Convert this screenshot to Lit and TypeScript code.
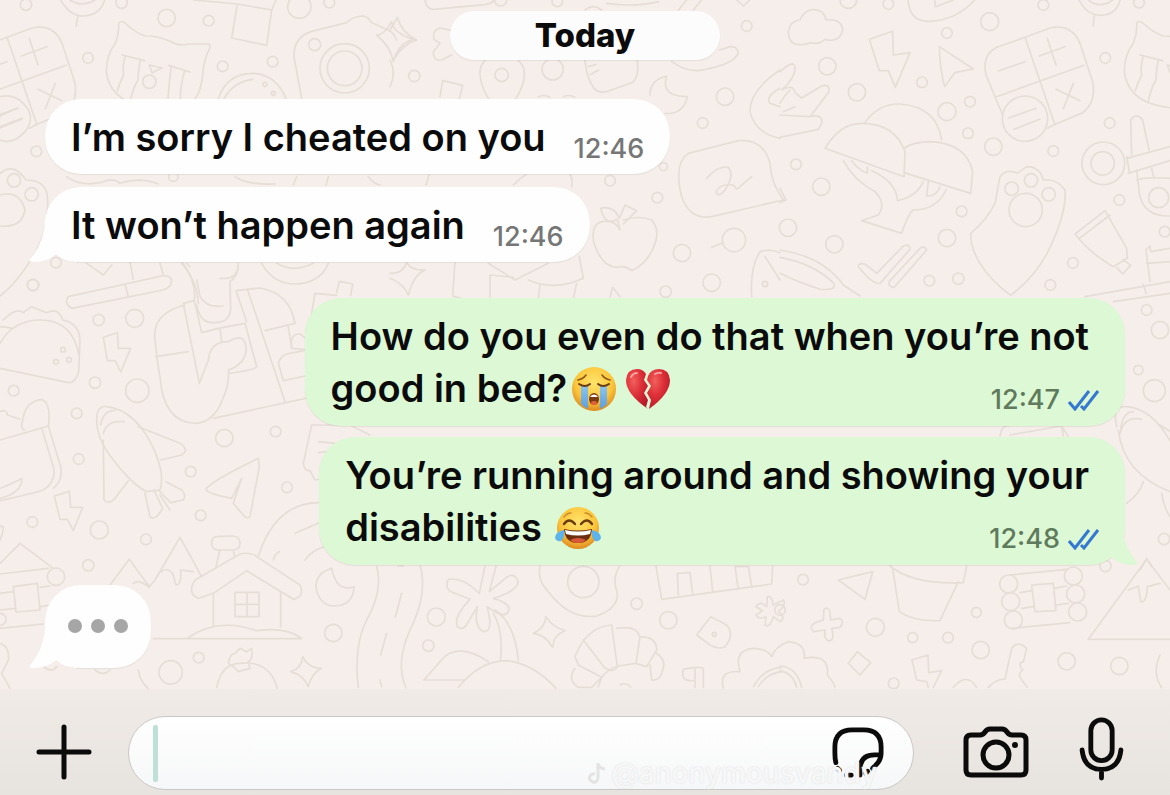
import { LitElement, html, css, svg, nothing, TemplateResult } from "lit";
import { customElement, property } from "lit/decorators.js";

/* Wallpaper doodles. Each group is drawn on a 3x grid and placed at an origin. */
interface DoodleGroup {
  x: number;
  y: number;
  paths: string[];
  dots: [number, number, number][];
}

const calculator =
  "M735 112L810 84Q875 70 900 130L938 245Q950 310 905 340L820 375L803 385M735 112L650 142Q605 165 618 225L668 345M735 112L825 375M650 290L912 196M655 213L735 185M778 168L855 140M802 115L828 195M828 268L900 302M880 250L850 326M685 354L768 325M702 388L780 357";
const cat =
  "M1060 130Q1072 100 1070 70Q1078 58 1092 72Q1120 98 1150 108Q1190 108 1224 124Q1250 140 1280 132L1342 132Q1348 140 1336 160Q1324 190 1322 225Q1315 300 1270 320Q1180 335 1105 308Q1040 280 1033 215Q1033 165 1060 130M1080 165L1148 182M1090 168Q1080 200 1085 225Q1072 250 1066 272M1135 180Q1128 215 1128 240Q1112 265 1104 308M1220 196L1284 216M1228 200Q1222 240 1218 295M1268 212Q1256 250 1254 300M1162 195L1200 204L1170 218Z";

const groups: DoodleGroup[] = [
  {
    x: 0,
    y: 0,
    paths: [
      "M182 0Q210 48 250 48Q300 46 314 0M210 0Q245 24 285 0M234 48L228 78",
      "M580 0L712 12L695 114L800 136L815 30M712 12L815 30L828 0",
      "M905 296L882 170Q880 112 935 94L1040 68Q1060 48 1090 48Q1108 52 1112 66L1150 84Q1180 92 1190 120M1130 105Q1150 108 1175 65Q1180 100 1240 118Q1195 130 1180 185Q1172 140 1130 105",
      "M655 296Q680 220 760 220Q830 225 858 296M672 296Q700 245 758 238",
      "M200 530Q240 560 300 548Q340 530 360 550Q420 530 475 552M705 530Q740 555 825 552M880 555L890 530M985 530L978 555M1105 530Q1120 550 1140 555",
      "M0 290Q40 280 70 310Q110 350 75 395Q40 435 0 420M0 348L50 325M0 380L66 355",
      "M0 520Q40 485 78 540Q138 540 142 590Q150 690 95 775Q50 850 0 888M0 585Q60 570 75 630Q65 685 0 678",
      "M205 890L485 828Q515 824 515 845Q515 860 490 870L215 925Q190 910 205 890M375 852L385 890M390 786L400 838M480 790L490 826",
      "M545 790Q590 840 595 910M560 790L570 800M715 790Q715 830 690 845L692 925Q690 970 640 968Q600 970 590 915M260 790L310 825L335 795M785 790Q820 852 885 852Q960 850 985 790M830 790Q880 820 940 790",
    ],
    dots: [[78, 14, 17], [365, 8, 17], [500, 54, 26], [626, 62, 16], [264, 174, 16], [668, 199, 16], [818, 185, 16], [944, 134, 18], [898, 20, 35], [988, 8, 16], [1034, 205, 74], [1034, 205, 52], [109, 454, 16], [42, 541, 20], [95, 583, 20], [168, 788, 16], [99, 855, 17], [520, 530, 14], [795, 253, 6], [820, 280, 6]],
  },
  {
    x: 390,
    y: 0,
    paths: [
      "M105 0Q110 28 130 28L285 14Q312 8 310 0M650 10Q740 22 805 5M865 30L890 0M910 30L935 0M1040 0L1060 18L1080 0",
      "M185 92L150 84Q125 92 132 118L150 130L130 155Q130 185 155 180L185 165",
      "M295 296Q250 215 285 182M385 182Q425 215 378 296M150 290L158 242L218 256L208 296",
      "M585 182Q590 235 612 265Q625 280 650 275L725 248Q748 235 742 182M595 200L618 194M600 224L626 210",
      "M845 185Q900 225 960 205Q1030 190 1045 160Q1040 130 1005 145L988 150M585 30Q610 10 635 30",
      "M830 228Q780 240 780 285M830 228Q810 290 892 290Q880 345 825 340",
      "M1170 210Q1080 270 1080 335Q1095 400 1170 415M1170 265Q1125 290 1140 310L1170 320",
      "M895 460L1045 422Q1120 415 1140 490Q1145 545 1165 575L1180 600L965 650Q900 660 875 590Q850 490 895 460M950 535Q985 495 1015 502Q1035 525 1005 570Q985 595 978 575Q990 550 1030 555L1040 568L1085 530",
      "M108 555L118 522M370 555Q390 535 410 522M540 522Q550 540 545 560M445 290Q465 282 480 292M520 290Q540 282 555 292",
      "M690 690L682 658Q645 680 632 625Q670 615 688 655L705 615L740 632L700 672M700 660Q750 645 785 660Q810 690 795 730Q775 790 725 812Q705 795 680 802Q635 800 612 730Q600 670 640 664Q675 660 690 690",
      "M965 742L1000 728M1085 890Q1080 800 1110 755Q1140 745 1170 758M1125 770L1170 840M660 890L668 862L690 890",
      "M195 786L188 888L215 895M295 790L375 840L475 790M415 840Q495 875 580 835L568 770M300 890L300 825L370 832M450 855L445 895M560 850L550 895",
      "M0 820Q40 822 50 786Q60 812 105 810Q70 825 55 885Q40 850 0 835M0 90L22 52Q35 100 80 120Q40 130 10 180M0 180Q20 220 0 260",
    ],
    dots: [[335, 225, 20], [73, 228, 17], [488, 208, 32], [1070, 78, 16], [1005, 290, 26], [938, 369, 16], [660, 542, 16], [802, 593, 16], [1032, 720, 35], [876, 759, 26], [965, 848, 26], [827, 875, 17], [1125, 852, 8], [502, 4, 16], [332, 0, 18], [820, 500, 12]],
  },
  {
    x: 780,
    y: 0,
    paths: [
      calculator,
      cat,
      "M60 60Q80 15 125 35Q135 45 138 60Q185 55 188 90Q178 130 135 118Q115 135 95 128Q25 150 25 95Q30 62 60 60",
      "M384 0Q390 68 450 64Q530 60 584 0M464 0L466 20L520 0",
      "M897 0Q920 46 962 46Q1010 44 1020 0M925 0Q960 28 998 0M942 48L940 78",
      "M268 118L338 94L340 165L390 158L346 262L325 212L298 212Z",
      "M478 140L580 207L524 218L494 260Q480 210 478 140",
      "M0 215Q45 175 45 205Q45 235 5 270Q40 250 45 278L65 294L125 258Q150 250 147 275L90 350Q130 340 125 370L115 388L0 412M0 310Q10 290 30 270M10 335L45 320M0 345L90 350",
      "M135 445Q180 370 245 370Q345 370 375 455L372 530ZM255 368Q295 310 360 312Q470 320 485 420M372 445Q400 425 450 425Q560 430 578 515L572 580L372 518M190 482Q220 540 285 575Q320 610 295 645L245 662L365 700Q385 640 400 630Q470 630 498 570M215 482Q235 510 262 520L262 502M275 512Q350 545 352 602Q410 590 430 545M445 545L440 588Q470 590 480 560",
      "M572 700Q570 740 600 790Q630 840 692 886Q780 820 820 720Q860 630 855 570Q830 535 790 540Q780 500 740 500L712 520Q680 505 660 530L645 610Q620 660 572 700",
      "M1040 475L1170 440M1045 520L1170 482M1055 465L1052 360Q1070 335 1088 360L1107 450M1070 510L1078 580Q1090 650 1170 648M1070 540Q1100 530 1170 535M1115 505L1122 535M1040 470L1048 515",
      "M885 702L975 632L1040 745L1042 775L1000 800Q930 760 885 702M898 715L990 645M1030 778L1052 796L1028 822L1010 802",
      "M235 795Q250 785 265 800L290 820L370 738Q390 730 390 748L300 850Q280 855 235 800M420 745Q435 735 440 750L342 862Q320 860 330 842L420 745",
      "M0 750Q130 770 190 855L240 888M0 772Q100 790 162 850Q170 872 120 868Q50 845 0 820M0 565L18 600L0 608",
      "M1170 845L915 890M1170 880L1000 905M1090 852L1098 880M1110 845L1098 750L1110 738L1112 755L1170 745M1100 790L1170 785",
    ],
    dots: [[205, 0, 25], [325, 12, 16], [142, 199, 26], [231, 277, 26], [426, 247, 16], [501, 99, 16], [629, 65, 27], [790, 15, 16], [1077, 8, 16], [976, 174, 16], [501, 335, 27], [570, 305, 16], [564, 400, 16], [640, 440, 26], [735, 356, 68], [820, 453, 16], [989, 369, 16], [970, 490, 64], [968, 490, 35], [1136, 593, 30], [1018, 600, 16], [48, 493, 16], [124, 560, 26], [24, 683, 26], [163, 733, 26], [545, 634, 16], [501, 714, 26], [695, 566, 20], [753, 541, 20], [806, 583, 20], [737, 630, 50], [879, 789, 16], [811, 855, 16], [535, 836, 17], [448, 842, 16], [1154, 695, 16]],
  },
  {
    x: 0,
    y: 260,
    paths: [
      "M10 180Q50 140 70 158L95 140L140 158Q175 140 188 180Q240 190 240 245L236 335Q225 370 205 368L0 325M0 250Q40 180 120 180Q220 180 238 290M0 200Q20 200 35 205",
      "M0 540L125 504L160 620Q170 665 130 690Q100 700 0 722M125 504L145 498L182 620Q190 660 160 685M68 480Q60 510 75 510M68 480Q75 425 125 418Q155 430 145 498M0 455Q20 445 22 465L60 478M0 685Q40 670 66 655Q65 700 0 715",
      "M310 232L352 218L355 265L392 265L362 336L345 302L322 302ZM163 708L208 694L212 742L248 742L220 812L202 778L180 778Z",
      "M290 480Q290 435 320 440Q410 450 465 575Q495 650 480 690L440 695Q390 670 325 580Q290 530 290 480M302 495Q310 450 345 452M310 520Q320 480 372 485M415 500L540 550Q570 570 545 585L482 600M310 540L312 720Q325 735 345 715L385 662M435 700L450 770Q465 785 488 745L462 690M480 705L510 750M498 665L545 690Q560 705 550 720L512 728L475 690",
      "M618 688Q630 665 775 595L778 620L750 770Q740 780 725 760L700 730L725 655L695 715Q620 700 618 688",
      "M555 135Q455 160 465 240Q475 330 480 350Q490 490 590 490Q640 485 665 425Q690 370 685 330Q740 310 738 265Q735 215 685 245Q630 245 625 300L598 370L550 130L583 122L605 218L655 205M468 290L565 275M583 122Q590 60 545 5M708 92L740 185M743 90L855 425M708 92L780 84Q870 100 885 190L795 212M655 205L735 190L770 320Q765 330 690 340M660 205L665 245M640 475L930 412M865 200L875 265L930 270M875 260Q870 220 900 222L930 245M835 310Q840 290 860 282L930 268M835 310L850 362L930 345",
      "M1010 98L1018 64L1058 72L1052 106M930 190L945 100L1010 106M715 20Q710 60 660 55M590 60L600 110Q620 145 670 138",
      "M910 610L935 495L1050 495L1110 525M910 610Q912 632 930 632L945 660L970 655M955 545L1005 550M955 578L980 575",
      "M775 888Q830 720 970 728M885 820L965 785M820 900Q825 880 838 875M915 900Q935 870 980 858",
    ],
    dots: [[99, 75, 17], [296, 180, 17], [404, 175, 27], [285, 368, 17], [41, 392, 16], [412, 392, 35], [230, 460, 16], [236, 597, 16], [673, 534, 26], [827, 515, 16], [572, 635, 16], [861, 682, 16], [602, 766, 16], [97, 786, 16], [298, 810, 27], [438, 838, 16], [189, 269, 7], [168, 305, 7], [207, 299, 7]],
  },
  {
    x: 0,
    y: 500,
    paths: [
      "M0 190L60 130L160 205M0 222L145 205M40 260L112 250L120 330L48 336ZM0 280L40 275M0 330L45 325M120 262L150 258M122 320L145 316M0 385L130 372M0 80Q20 70 0 120",
      "M330 255L388 178L448 260L465 240L540 112L605 230M400 250Q415 235 448 262M485 215Q500 200 518 220L528 255Q545 255 542 210L580 215",
      "M640 280L595 295Q560 280 585 240L720 162Q750 155 770 170L900 255Q915 290 880 298L740 212L640 280V380M842 275V380M705 277H777V350H705ZM741 277V350M705 313H777M660 150L648 200M700 155L705 170M650 110Q635 110 635 128Q635 150 655 150L705 150Q722 145 720 125Q715 108 695 108Z",
      "M460 416H905Q860 380 770 392Q650 350 560 416M0 430Q30 440 25 480L5 520L30 565M415 510Q420 545 445 566M130 500Q155 520 170 500M285 510Q310 530 330 510",
      "M995 205Q945 220 948 265Q960 318 1005 318Q1060 315 1062 260Q1010 280 995 205M1130 200Q1150 270 1100 360Q1060 440 1075 562M1160 400L1142 465M1140 540L1145 560",
      "M650 562Q665 490 720 490Q810 480 832 566M685 490Q690 460 705 460L720 445L740 455L755 445Q760 480 745 485L750 505L715 515L700 500ZM872 515Q905 505 908 470Q925 505 965 505Q935 520 925 560Q910 525 872 515",
    ],
    dots: [[265, 196, 17], [168, 230, 26], [0, 358, 18], [1000, 399, 26], [512, 517, 35], [596, 473, 16]],
  },
  {
    x: 390,
    y: 540,
    paths: [
      "M90 75Q115 160 60 270Q15 370 48 443M35 160L16 230M25 78L40 78",
      "M285 78L268 160Q220 110 175 118Q160 150 195 160L240 178Q190 230 202 260Q220 275 235 245L262 200Q250 260 280 275Q300 275 300 245L292 200Q350 245 358 205Q350 185 310 175Q380 155 385 125Q370 90 340 120L298 155L318 78",
      "M310 220Q340 270 332 358M315 210Q375 250 385 362M205 442Q270 362 350 362Q430 370 498 445M295 365Q200 300 150 365L102 420H225",
      "M450 78Q440 120 475 155Q540 240 620 228Q685 205 682 160Q665 110 690 78",
      "M430 280Q465 265 468 230Q485 260 525 272Q490 285 488 322Q468 285 430 280",
      "M555 385Q530 420 565 442L605 442L635 412L565 375L555 350Q590 260 665 255L682 380Q670 400 645 385L580 300M680 265Q740 255 750 290L738 370L685 378M750 290Q800 290 800 330L770 380L738 370M800 340Q830 360 818 390Q810 425 785 420L780 375M630 420Q655 380 690 378M690 435Q710 425 722 442M635 412L625 440",
      "M798 78L815 178L1145 132L1148 78M865 165L862 100L900 98L908 162M960 78L968 155M1045 148L1035 80L1075 80L1085 138",
      "M962 230L1010 255Q1035 285 1005 320Q985 330 960 315L920 285ZM880 388Q930 378 940 385L940 442M915 442V388M880 388Q870 425 910 422",
      "M1098 200Q1110 180 1130 200L1132 170Q1145 165 1150 195L1180 180Q1190 195 1165 215Q1190 235 1170 245L1150 230Q1140 265 1125 255L1128 230Q1105 240 1098 225L1118 212Z",
      "M1000 443Q985 390 1050 395Q1030 330 1090 325Q1130 325 1145 350Q1155 320 1195 305M1090 440Q1120 385 1175 382M1105 440Q1130 400 1175 395",
    ],
    dots: [[139, 231, 27], [115, 317, 17], [580, 126, 47], [740, 191, 17], [835, 241, 26], [973, 283, 6]],
  },
  {
    x: 780,
    y: 540,
    paths: [
      "M25 305Q80 310 72 355Q150 340 142 405Q160 425 165 442M0 378Q50 380 65 442M0 392Q40 400 50 442",
      "M175 120L278 95L255 178ZM338 85L358 215Q400 245 480 242L535 125M330 78Q400 135 550 128L560 78",
      "M132 208Q145 200 150 215L152 240L180 235Q195 245 180 262L155 265Q165 300 148 303Q130 300 135 270L100 275Q85 260 105 248L130 240Z",
      "M232 335L272 368L240 405L205 370ZM396 360L444 345L446 398L485 392L460 442M396 360L410 420L440 425L445 442M520 442Q560 395 590 442M625 442Q650 415 675 418L695 325Q715 300 740 325L730 365Q710 370 728 390Q710 400 725 420L742 442",
      "M690 105L860 88M695 265L870 248M755 135L820 130L828 212L765 215ZM720 158L755 152M725 205L760 200M822 145L860 138M828 195L865 190",
      "M925 298L1100 58L1170 150M925 298H1170M1045 150L1075 138L1082 185Q1100 190 1102 140L1140 130M1140 345Q1115 400 1145 443",
    ],
    dots: [[69, 119, 16], [286, 262, 27], [398, 293, 15], [504, 293, 16], [589, 217, 15], [602, 330, 26], [860, 364, 26], [1018, 378, 26], [341, 430, 16], [976, 78, 17], [686, 132, 27], [692, 185, 27], [700, 240, 27], [880, 108, 27], [887, 162, 27], [893, 216, 27], [0, 210, 16]],
  },
  {
    x: 960,
    y: 370,
    paths: [
      "M470 170Q455 105 500 110Q580 115 640 230M475 180Q490 310 630 365M480 190Q495 135 545 148M482 175Q490 125 520 125M600 165L640 190M500 400Q540 370 550 335M605 370Q610 410 630 440M540 600L560 565L575 590M120 198Q125 165 145 168M150 195L305 168L325 200M305 168L310 198",
    ],
    dots: [[583, 62, 33], [612, 507, 17], [535, 0, 14], [600, -120, 26], [560, -180, 16]],
  },
];

@customElement("chat-wallpaper")
export class ChatWallpaper extends LitElement {
  static styles = css`
    :host {
      display: block;
      overflow: hidden;
      background: #f5eeea;
    }
    .art {
      display: block;
      width: 100%;
      height: 100%;
      fill: none;
      stroke: #e6ddd7;
      stroke-width: 5;
      stroke-linecap: round;
      stroke-linejoin: round;
    }
  `;

  render() {
    return html`<svg class="art" viewBox="0 0 1170 689" preserveAspectRatio="xMinYMin slice" aria-hidden="true">
      ${groups.map(
        (g) => svg`<g transform="translate(${g.x} ${g.y}) scale(0.33333)">
          ${g.paths.map((d) => svg`<path d=${d} />`)}
          ${g.dots.map(([cx, cy, r]) => svg`<circle cx=${cx} cy=${cy} r=${r} />`)}
        </g>`
      )}
      <g transform="translate(-238 0) scale(0.33333)">
        <path d=${calculator} />
        <path d=${cat} />
        <circle cx="1162" cy="245" r="20" />
      </g>
    </svg>`;
  }
}

const face = svg`<defs>
    <radialGradient id="skin" cx="50%" cy="35%" r="65%">
      <stop offset="0" stop-color="#ffe36b" />
      <stop offset="0.65" stop-color="#fbc53a" />
      <stop offset="1" stop-color="#de8a22" />
    </radialGradient>
    <linearGradient id="tear" x1="0" y1="0" x2="0" y2="1">
      <stop offset="0" stop-color="#8cc4ee" />
      <stop offset="1" stop-color="#5a9fdc" />
    </linearGradient>
    <radialGradient id="heart" cx="35%" cy="30%" r="75%">
      <stop offset="0" stop-color="#f2605c" />
      <stop offset="0.5" stop-color="#dd2f38" />
      <stop offset="1" stop-color="#b81a2a" />
    </radialGradient>
  </defs>`;

const emojis: Record<string, { label: string; art: TemplateResult }> = {
  sob: {
    label: "loudly crying face",
    art: html`<svg viewBox="0 0 46 46">
      ${face}
      <circle cx="23" cy="23" r="22" fill="url(#skin)" />
      <path d="M10 20h7v23Q13 41 10 38zM29 20h7v18Q33 41 29 43z" fill="url(#tear)" />
      <path d="M8 18Q14 22 19 18M27 18Q32 22 38 18" fill="none" stroke="#6a3d12" stroke-width="2" stroke-linecap="round" />
      <path d="M7 14Q12 13 15 9M39 14Q34 13 31 9" fill="none" stroke="#8a5518" stroke-width="1.6" stroke-linecap="round" />
      <ellipse cx="23" cy="33" rx="5" ry="6" fill="#7a3b14" />
      <path d="M19.500 30Q23 27 26.500 30V31H19.500z" fill="#fff" />
      <ellipse cx="23" cy="37" rx="3" ry="2" fill="#e2603c" />
    </svg>`,
  },
  broken: {
    label: "broken heart",
    art: html`<svg viewBox="0 0 46 46">
      ${face}
      <path d="M23 43Q1 28 1 14Q2 3 12 3Q18 3 21 8L19 14L23 20L19 27L23 34L21 41z" fill="url(#heart)" />
      <path d="M24 43Q45 28 45 14Q44 3 34 3Q26 3 23 10L22 14L26 20L22 27L26 34z" fill="url(#heart)" />
      <path d="M6 11Q8 7 12 7M30 8Q33 6 36 7" fill="none" stroke="#f9a19b" stroke-width="2" stroke-linecap="round" />
    </svg>`,
  },
  joy: {
    label: "face with tears of joy",
    art: html`<svg viewBox="0 0 46 46">
      ${face}
      <circle cx="23" cy="23" r="21" fill="url(#skin)" />
      <path d="M9 19Q14 12 20 19M26 19Q32 12 37 19" fill="none" stroke="#6a3d12" stroke-width="2.400" stroke-linecap="round" />
      <path d="M9 12Q12 8 16 8M37 12Q34 8 30 8" fill="none" stroke="#c98a2a" stroke-width="1.400" stroke-linecap="round" />
      <path d="M9 24Q23 27 37 24Q36 38 23 38Q10 38 9 24z" fill="#6b2f12" />
      <path d="M10 25Q23 28 36 25L35 29Q23 32 11 29z" fill="#fff" />
      <path d="M15 35Q23 31 31 35Q28 38 23 38Q18 38 15 35z" fill="#d9573a" />
      <path d="M9 25Q0 27 0 33Q2 37 6 36Q10 33 9 25zM37 25Q46 27 46 33Q44 37 40 36Q36 33 37 25z" fill="#5db4ea" />
    </svg>`,
  },
};

@customElement("chat-emoji")
export class ChatEmoji extends LitElement {
  @property() name = "joy";

  static styles = css`
    :host {
      display: inline-block;
      width: 46px;
      height: 46px;
      margin: 0 4px;
      vertical-align: -10px;
    }
    svg {
      display: block;
      width: 100%;
      height: 100%;
    }
  `;

  render() {
    const e = emojis[this.name];
    return html`<span role="img" aria-label=${e.label}>${e.art}</span>`;
  }
}

@customElement("chat-bubble")
export class ChatBubble extends LitElement {
  @property({ type: Boolean, reflect: true }) mine = false;
  @property({ type: Boolean, reflect: true }) tail = false;
  @property({ type: Boolean, reflect: true }) typing = false;
  @property() time = "";

  static styles = css`
    :host {
      display: block;
      position: relative;
      isolation: isolate;
      box-sizing: border-box;
      width: fit-content;
      color: #0b0b0b;
      background: #fefefe;
      border-radius: 36px;
      padding: 12px 26px 11px;
      box-shadow: 0 1px 1px rgba(120, 100, 90, 0.12);
    }
    :host([mine]) {
      align-self: flex-end;
      padding-bottom: 12px;
      background: #dcf8d4;
    }
    .body {
      display: flex;
      align-items: flex-end;
      gap: 28px;
    }
    :host([mine]) .body {
      display: grid;
    }
    .text {
      font-size: 38px;
      line-height: 52px;
      font-weight: 570;
      white-space: nowrap;
    }
    :host([mine]) .text {
      grid-area: 1 / 1;
      padding-right: 10px;
    }
    .meta {
      display: flex;
      align-items: center;
      gap: 8px;
      font-size: 27px;
      line-height: 28px;
      font-weight: 500;
      color: #767676;
    }
    :host([mine]) .meta {
      grid-area: 1 / 1;
      place-self: end;
      color: #5f7a5d;
    }
    .ticks {
      width: 31px;
      height: 22px;
      fill: none;
      stroke: #3478d0;
      stroke-width: 3;
    }
    .tail {
      position: absolute;
      z-index: -1;
      left: -16px;
      bottom: 0;
      width: 48px;
      height: 44px;
      fill: #fefefe;
    }
    :host([mine]) .tail {
      left: auto;
      right: -13px;
      fill: #dcf8d4;
      transform: scaleX(-1);
    }
    :host([typing]) {
      padding: 34px 23px 35px;
    }
    .dots {
      display: flex;
      gap: 9px;
    }
    .dot {
      width: 14px;
      height: 14px;
      border-radius: 50%;
      background: #a6a6a6;
    }
  `;

  render() {
    return html`
      ${this.tail
        ? html`<svg class="tail" viewBox="0 0 48 44" aria-hidden="true">
            <path d="M16 0Q16 24 1 41Q-1 44 5 44Q18 44 27 36Q34 43 48 44V0z" />
          </svg>`
        : nothing}
      ${this.typing
        ? html`<div class="dots" role="status" aria-label="typing">
            <span class="dot"></span><span class="dot"></span><span class="dot"></span>
          </div>`
        : html`<div class="body">
            <div class="text"><slot></slot></div>
            <div class="meta">
              <time>${this.time}</time>
              ${this.mine
                ? html`<svg class="ticks" viewBox="0 0 31 22" aria-hidden="true">
                    <path d="M1 13L7 20L21 2M13 17L16 20L30 2" />
                  </svg>`
                : nothing}
            </div>
          </div>`}
    `;
  }
}

@customElement("chat-composer")
export class ChatComposer extends LitElement {
  static styles = css`
    :host {
      display: flex;
      align-items: center;
      box-sizing: border-box;
      height: 106px;
      padding: 20px 46px 0 32px;
      background: linear-gradient(#f0ebe6, #e7e3de);
    }
    .icon {
      display: block;
      padding: 0;
      border: 0;
      background: none;
      color: #0b0b0b;
      cursor: pointer;
    }
    .icon svg {
      display: block;
      fill: none;
      stroke: currentColor;
      stroke-width: 5;
      stroke-linecap: round;
      stroke-linejoin: round;
    }
    .field {
      position: relative;
      flex: 1;
      display: flex;
      align-items: center;
      box-sizing: border-box;
      height: 74px;
      margin: 2px 49px 0 32px;
      padding: 0 29px 0 24px;
      border: 1px solid #cbc8c8;
      border-radius: 37px;
      background: linear-gradient(#ffffff, #f6f7f8);
    }
    .caret {
      width: 5px;
      height: 57px;
      border-radius: 2px;
      background: #bfe0d6;
    }
    .entry {
      flex: 1;
      min-width: 0;
      height: 60px;
      padding: 0 8px;
      border: 0;
      outline: 0;
      background: none;
      font: 600 38px Inter, sans-serif;
    }
    .mic {
      margin: 0 0 6px 50px;
    }
    .credit {
      position: absolute;
      right: 36px;
      bottom: 0;
      display: flex;
      align-items: center;
      gap: 4px;
      font-size: 28px;
      line-height: 32px;
      font-weight: 500;
      color: #f7f7f8;
      text-shadow: 0 0 2px #dcdcde;
      pointer-events: none;
    }
    .note {
      width: 20px;
      height: 24px;
      fill: none;
      stroke: #e4e4e5;
      stroke-width: 3;
    }
  `;

  render() {
    return html`
      <button class="icon" aria-label="Attach">
        <svg width="64" height="64" viewBox="0 0 64 64"><path d="M32 7V57M7 32H57" /></svg>
      </button>
      <div class="field">
        <span class="caret"></span>
        <input class="entry" type="text" aria-label="Message" />
        <button class="icon" aria-label="Stickers">
          <svg width="52" height="52" viewBox="0 0 54 54">
            <path d="M4 37Q3 33 3 27V21Q3 3 21 3H33Q51 3 51 21V27Q51 34 46 39M50 29H44Q29 29 29 45V50" />
            <path d="M6 43L8 45M15 50H20M35 48L37 46M42 43L44 41" />
          </svg>
        </button>
        <span class="credit">
          <svg class="note" viewBox="0 0 20 24" aria-hidden="true">
            <path d="M11 2V17Q10 22 6 21Q1 19 3 15Q5 12 8 13M11 3Q13 8 18 8" />
          </svg>
          @anonymousvandy
        </span>
      </div>
      <button class="icon" aria-label="Camera">
        <svg width="66" height="52" viewBox="0 0 66 52">
          <path d="M8 9H17Q20 9 22 6Q24 3 27 3H39Q42 3 44 6Q46 9 49 9H58Q63 9 63 14V44Q63 49 58 49H8Q3 49 3 44V14Q3 9 8 9Z" />
          <circle cx="33" cy="29" r="13" />
          <circle cx="52" cy="19" r="3" fill="currentColor" stroke="none" />
        </svg>
      </button>
      <button class="icon mic" aria-label="Record voice">
        <svg width="45" height="64" viewBox="0 0 46 66">
          <rect x="12" y="3" width="22" height="42" rx="11" />
          <path d="M3 34Q5 54 23 54Q41 54 43 34M23 54V63" />
        </svg>
      </button>
    `;
  }
}

@customElement("app-root")
export class AppRoot extends LitElement {
  static styles = css`
    :host {
      display: flex;
      flex-direction: column;
      min-height: 100vh;
      font-family: Inter, "Noto Sans", sans-serif;
      background: #f5eeea;
    }
    .thread {
      position: relative;
      flex: 1;
      display: flex;
      flex-direction: column;
      box-sizing: border-box;
      padding: 11px 45px 20px;
    }
    .wallpaper {
      position: absolute;
      inset: 0;
    }
    .day {
      position: relative;
      align-self: center;
      box-sizing: border-box;
      width: 270px;
      margin: 0 0 39px;
      border-radius: 24px;
      background: #fdfcfd;
      color: #0b0b0b;
      font-size: 33px;
      line-height: 49px;
      font-weight: 800;
      text-align: center;
      box-shadow: 0 1px 1px rgba(120, 100, 90, 0.12);
    }
    .group {
      display: flex;
      flex-direction: column;
      gap: 13px;
      margin-bottom: 36px;
    }
    .mine {
      gap: 11px;
      margin-bottom: 20px;
    }
  `;

  render() {
    return html`
      <main class="thread">
        <chat-wallpaper class="wallpaper"></chat-wallpaper>
        <div class="day">Today</div>
        <div class="group">
          <chat-bubble time="12:46">I’m sorry I cheated on you</chat-bubble>
          <chat-bubble time="12:46" tail>It won’t happen again</chat-bubble>
        </div>
        <div class="group mine">
          <chat-bubble mine time="12:47"
            >How do you even do that when you’re not<br />good in bed?<chat-emoji name="sob"></chat-emoji
            ><chat-emoji name="broken"></chat-emoji
          ></chat-bubble>
          <chat-bubble mine tail time="12:48"
            >You’re running around and showing your<br />disabilities <chat-emoji name="joy"></chat-emoji
          ></chat-bubble>
        </div>
        <chat-bubble typing tail></chat-bubble>
      </main>
      <chat-composer></chat-composer>
    `;
  }
}
